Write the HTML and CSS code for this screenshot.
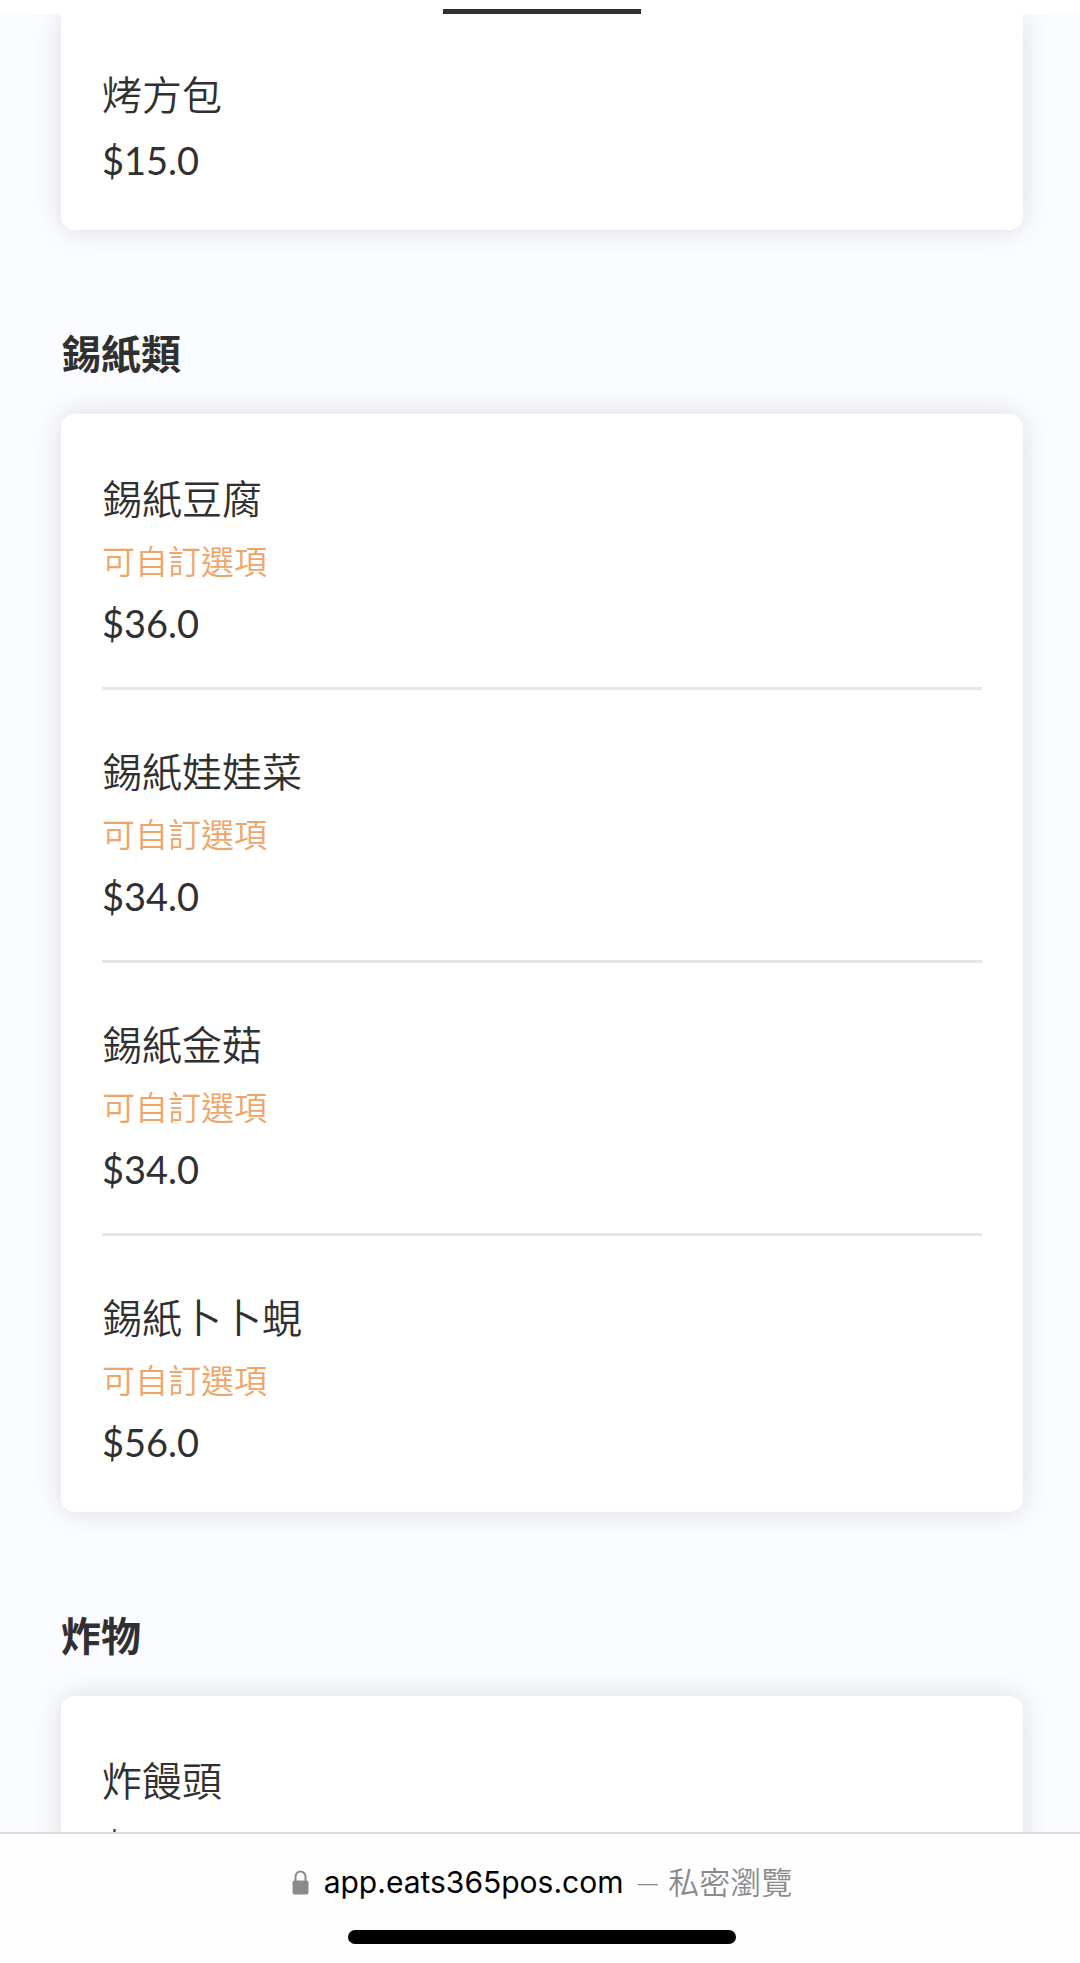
FILE: index.html
```html
<!DOCTYPE html>
<html lang="zh-Hant">
<head>
    <meta charset="UTF-8">
    <meta name="viewport" content="width=device-width, initial-scale=1">
    <title>app.eats365pos.com</title>
    <link rel="stylesheet" href="styles.css">
</head>
<body>
<header class="tab-bar">
    <span class="tab-indicator"></span>
</header>

<main class="menu">
    <section>
        <ul class="card card-continued">
            <li class="item">
                <h3 class="item-name">烤方包</h3>
                <p class="item-price">$15.0</p>
            </li>
        </ul>
    </section>

    <section>
        <h2 class="category">錫紙類</h2>
        <ul class="card">
            <li class="item">
                <h3 class="item-name">錫紙豆腐</h3>
                <p class="item-option">可自訂選項</p>
                <p class="item-price">$36.0</p>
            </li>
            <li class="item">
                <h3 class="item-name">錫紙娃娃菜</h3>
                <p class="item-option">可自訂選項</p>
                <p class="item-price">$34.0</p>
            </li>
            <li class="item">
                <h3 class="item-name">錫紙金菇</h3>
                <p class="item-option">可自訂選項</p>
                <p class="item-price">$34.0</p>
            </li>
            <li class="item">
                <h3 class="item-name">錫紙卜卜蜆</h3>
                <p class="item-option">可自訂選項</p>
                <p class="item-price">$56.0</p>
            </li>
        </ul>
    </section>

    <section>
        <h2 class="category">炸物</h2>
        <ul class="card">
            <li class="item">
                <h3 class="item-name">炸饅頭</h3>
                <p class="item-price">$</p>
            </li>
        </ul>
    </section>
</main>

<footer class="browser-bar">
    <button type="button" class="address">
        <svg class="lock" viewBox="0 0 17 25" aria-hidden="true">
            <path d="M3.5 11V7a5 5.6 0 0 1 10 0v4" fill="none" stroke="#8a8a8d" stroke-width="2"/>
            <rect x="0.5" y="10.5" width="16" height="14" rx="2" fill="#8a8a8d"/>
        </svg>
        <span class="host">app.eats365pos.com</span>
        <span class="private">— 私密瀏覽</span>
    </button>
    <span class="home-indicator"></span>
</footer>
</body>
</html>
```
FILE: styles.css
```css
* {
    box-sizing: border-box;
    margin: 0;
    padding: 0;
}
body {
    display: flex;
    flex-direction: column;
    height: 100vh;
    background-color: #fafcff;
    color: #303030;
    font-family: Lato, "Noto Sans CJK TC", sans-serif;
}

/* tab strip */
.tab-bar {
    display: flex;
    flex: none;
    justify-content: center;
    align-items: flex-end;
    height: 14px;
    padding-left: 4px;
    background-color: #fff;
}
.tab-indicator {
    width: 198px;
    height: 5px;
    background-color: #303030;
}

/* menu */
.menu {
    flex: 1;
    min-height: 0;
    overflow: hidden;
    padding: 0 57px 0 61px;
}
.category {
    margin: 94px 0 30px;
    font-size: 40px;
    line-height: 60px;
    font-weight: bold;
}
.card {
    padding: 3px 41px 0;
    list-style: none;
    background-color: #fff;
    border-radius: 14px;
    box-shadow: 0 0 30px rgba(0, 0, 0, 0.13);
}
.card-continued {
    padding-top: 0;
    border-radius: 0 0 14px 14px;
}
.item {
    padding: 49px 0 32px;
    border-bottom: 3px solid #e6e6e6;
}
.item:last-child {
    padding-bottom: 38px;
    border-bottom: none;
}
.card-continued .item {
    padding-top: 48px;
}
.item-name {
    font-size: 40px;
    line-height: 66px;
    font-weight: 350;
}
.item-option {
    font-size: 33px;
    line-height: 59px;
    font-weight: 350;
    color: #f0a468;
}
.item-price {
    font-size: 38px;
    line-height: 64px;
}

/* browser bar */
.browser-bar {
    display: flex;
    flex: none;
    flex-direction: column;
    align-items: center;
    padding: 25px 0 19px 4px;
    background-color: #fefefe;
    border-top: 2px solid #dcdcdc;
}
.address {
    display: flex;
    align-items: center;
    margin-bottom: 25px;
    background: none;
    border: none;
    font-family: Inter, sans-serif;
    font-size: 30px;
    line-height: 46px;
}
.lock {
    width: 17px;
    height: 25px;
    margin-right: 15px;
}
.host {
    margin-right: 12px;
    color: #000;
}
.private {
    font-family: Lato, "Noto Sans CJK TC", sans-serif;
    font-size: 31px;
    font-weight: 350;
    color: #8a8a8d;
}
.home-indicator {
    width: 388px;
    height: 14px;
    background-color: #000;
    border-radius: 7px;
}
```
